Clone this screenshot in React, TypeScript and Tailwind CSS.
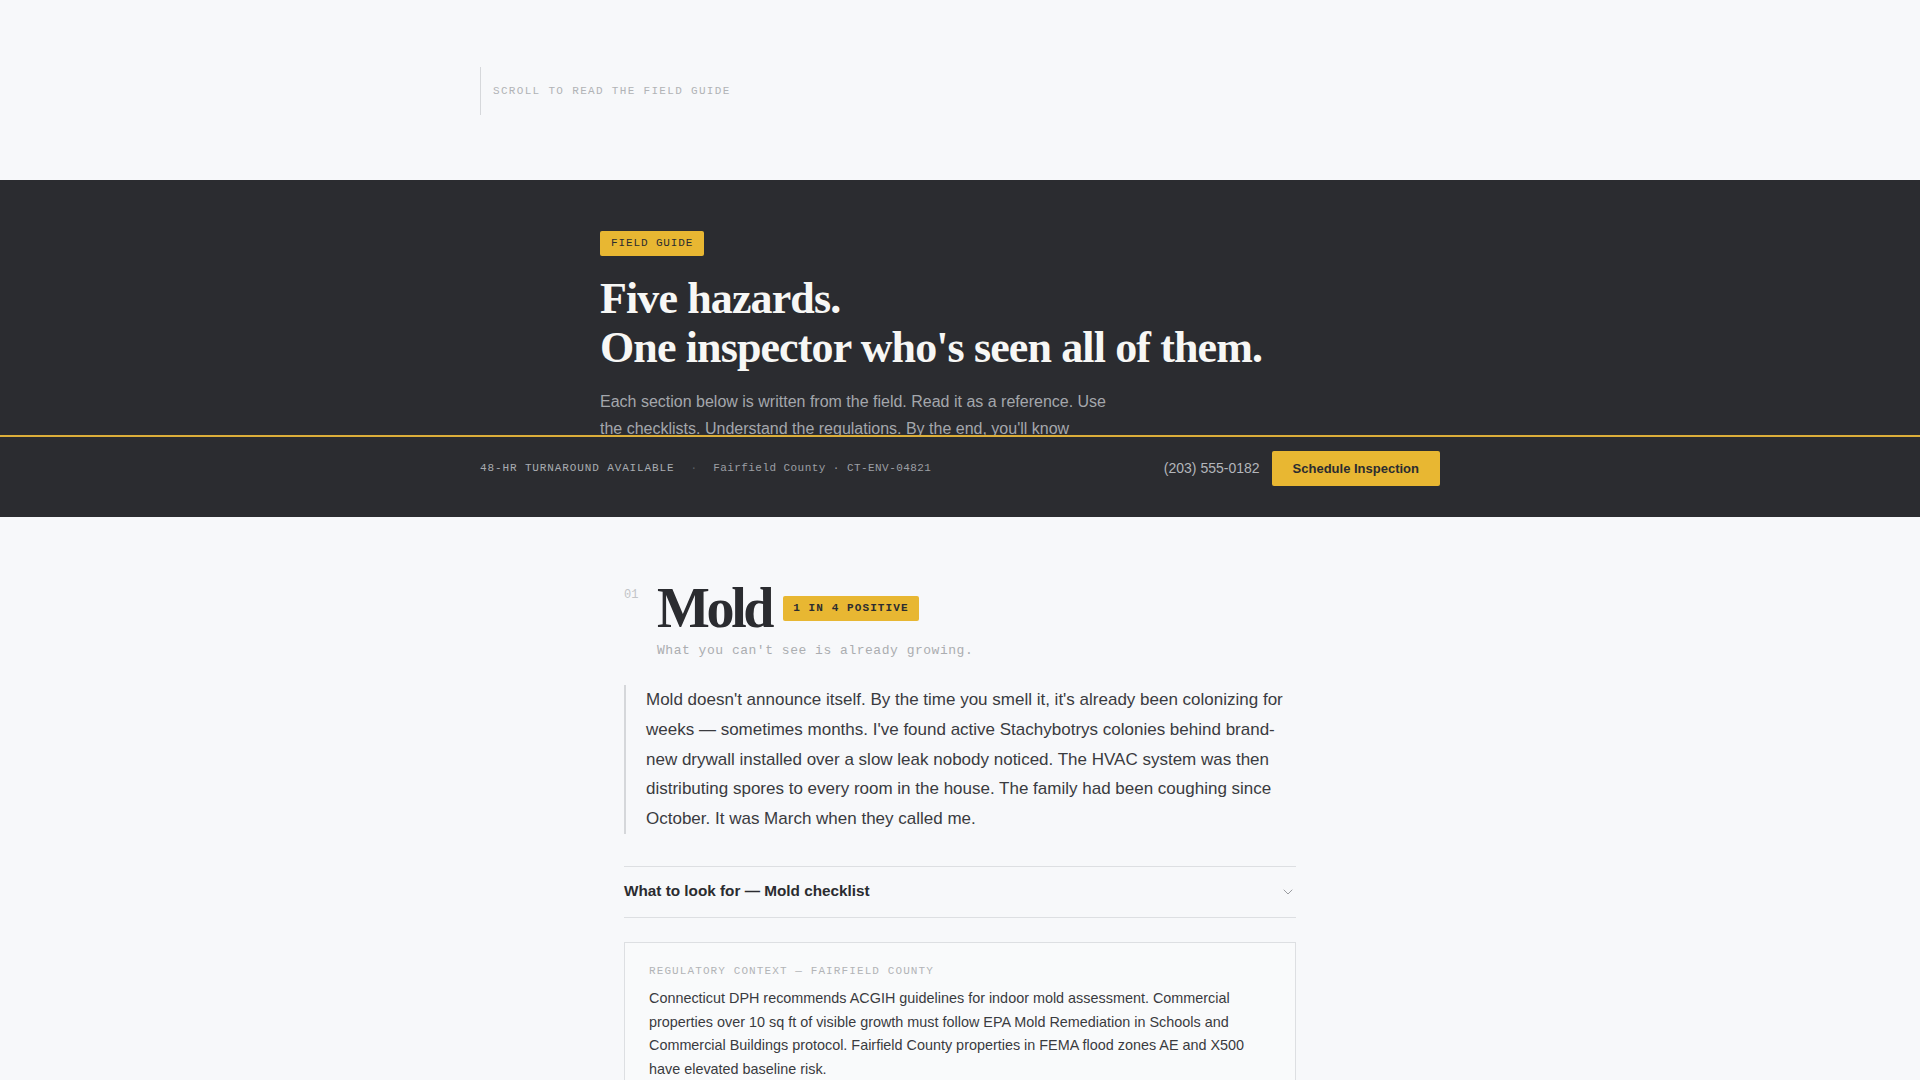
import { ChevronDown } from "lucide-react";

const mono = "font-['Liberation_Mono',monospace]";
const serif = "font-['Liberation_Serif',serif]";

function ScrollHint() {
  return (
    <div className="h-[180px]">
      <div className="mx-auto max-w-[960px] pt-[67px]">
        <div className={`flex h-[48px] items-center border-l border-[#d6d8db] pl-3 ${mono} text-[11px] uppercase tracking-[0.12em] text-[#b1b3b6]`}>
          Scroll to read the field guide
        </div>
      </div>
    </div>
  );
}

function Hero() {
  return (
    <section className="h-[255px] overflow-hidden bg-[#2b2c30]">
      <div className="mx-auto max-w-[720px] pt-[48px]">
        <span className={`inline-flex h-[25px] items-center rounded-[2px] bg-[#e8b732] px-[11px] ${mono} text-[11px] uppercase tracking-[0.08em] text-[#2b2c30]`}>
          Field guide
        </span>
        <h1 className={`mt-[18px] ${serif} text-[44px] font-bold leading-[49px] tracking-[-0.02em] text-[#f7f7f5]`}>
          Five hazards.
          <br />
          One inspector who's seen all of them.
        </h1>
        <p className="mt-[16px] max-w-[520px] font-['Liberation_Sans',sans-serif] text-[16px] leading-[27px] text-[#a4a7ac]">
          Each section below is written from the field. Read it as a reference. Use
          the checklists. Understand the regulations. By the end, you'll know
        </p>
      </div>
    </section>
  );
}

function InfoBar() {
  return (
    <div className="border-t-2 border-[#dcae3a] bg-[#2b2c30] pt-[14px] pb-[31px]">
      <div className="mx-auto flex max-w-[960px] items-center justify-between">
        <div className={`flex items-center ${mono} text-[11px]`}>
          <span className="uppercase tracking-[0.08em] text-[#a9acb1]">48-HR Turnaround Available</span>
          <span className="mx-[16px] text-[#5d6066]">·</span>
          <span className="tracking-[0.04em] text-[#9c9fa4]">Fairfield County · CT-ENV-04821</span>
        </div>
        <div className="flex items-center gap-3 font-['Liberation_Sans',sans-serif]">
          <span className="text-[14px] text-[#b3b6bb]">(203) 555-0182</span>
          <button className="h-[35px] rounded-[2px] bg-[#e8b732] px-[21px] text-[13px] font-bold text-[#2b2c30]">
            Schedule Inspection
          </button>
        </div>
      </div>
    </div>
  );
}

function MoldSection() {
  return (
    <section className="mx-auto max-w-[672px] pt-[63px] pb-24 font-['Liberation_Sans',sans-serif]">
      <div className="flex">
        <span className={`mt-[7px] w-[33px] shrink-0 ${mono} text-[12px] leading-4 text-[#c2c4c7]`}>01</span>
        <div>
          <div className="flex items-center gap-3">
            <h2 className={`${serif} text-[56px] font-bold leading-none tracking-[-0.06em] text-[#2b2c30]`}>Mold</h2>
            <span className={`inline-flex h-[25px] items-center rounded-[2px] bg-[#e8b732] px-[10px] ${mono} text-[11px] font-bold uppercase tracking-[0.1em] text-[#2b2c30]`}>
              1 in 4 positive
            </span>
          </div>
          <p className={`mt-[5px] ${mono} text-[13px] leading-5 tracking-[0.04em] text-[#abadb0]`}>
            What you can't see is already growing.
          </p>
        </div>
      </div>

      <blockquote className="mt-6 border-l-2 border-[#d5d7da] pl-5 text-[17px] leading-[1.75] text-[#3a3b3f]">
        Mold doesn't announce itself. By the time you smell it, it's already been colonizing for
        weeks — sometimes months. I've found active Stachybotrys colonies behind brand-new drywall
        installed over a slow leak nobody noticed. The HVAC system was then distributing spores to
        every room in the house. The family had been coughing since October. It was March when they
        called me.
      </blockquote>

      <div className="mt-8 flex h-[52px] items-center justify-between border-y border-[#dddfe2]">
        <span className="text-[15.3px] font-bold text-[#2b2c30]">What to look for — Mold checklist</span>
        <ChevronDown size={16} strokeWidth={1.5} className="text-[#9a9ca0]" />
      </div>

      <div className="mt-6 border border-[#dddfe2] bg-[#f9fafb] px-6 pt-5 pb-6">
        <div className={`${mono} text-[11px] uppercase leading-4 tracking-[0.1em] text-[#b2b4b7]`}>
          Regulatory context — Fairfield County
        </div>
        <p className="mt-2 text-[14.4px] leading-[1.65] text-[#3a3b3f]">
          Connecticut DPH recommends ACGIH guidelines for indoor mold assessment. Commercial
          properties over 10 sq ft of visible growth must follow EPA Mold Remediation in Schools and
          Commercial Buildings protocol. Fairfield County properties in FEMA flood zones AE and X500
          have elevated baseline risk.
        </p>
      </div>
    </section>
  );
}

export default function App() {
  return (
    <div className="min-h-screen bg-[#f7f8fa]">
      <ScrollHint />
      <Hero />
      <InfoBar />
      <MoldSection />
    </div>
  );
}
